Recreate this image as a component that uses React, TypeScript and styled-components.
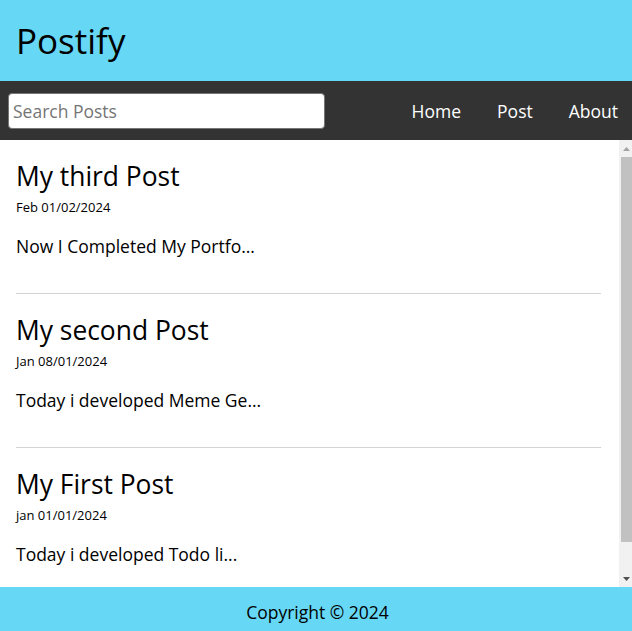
import React from "react";
import styled, { createGlobalStyle } from "styled-components";

const GlobalStyle = createGlobalStyle`
  * { margin: 0; padding: 0; box-sizing: border-box; }
  html { font-size: 18px; }
  body { font-family: "Open Sans", "Liberation Sans", sans-serif; color: #000; background: #fff; }
`;

const Shell = styled.div`
  height: 100vh;
  display: flex;
  flex-direction: column;
`;

const Header = styled.header`
  flex: 0 0 81px;
  background: #66d8f5;
  display: flex;
  align-items: center;
  padding: 0 16px;
`;

const Title = styled.h1`
  font-size: 35px;
  font-weight: 400;
`;

const Nav = styled.nav`
  flex: 0 0 59px;
  background: #333;
  display: flex;
  align-items: center;
  justify-content: space-between;
  padding-left: 8px;
`;

const Search = styled.input`
  width: 317px;
  height: 36px;
  font-family: inherit;
  font-size: 17.5px;
  padding: 0 4px;
  border: 1px solid #767676;
  border-radius: 4px;
  outline: none;
  &::placeholder { color: #757575; }
`;

const Links = styled.ul`
  list-style: none;
  display: flex;
  gap: 36px;
  padding-right: 14px;
`;

const LinkItem = styled.li`
  color: #fff;
  font-size: 17.5px;
`;

const Main = styled.main`
  flex: 1;
  min-height: 0;
  display: flex;
  background: #fff;
`;

const Feed = styled.div`
  flex: 1;
  min-width: 0;
  overflow: hidden;
  padding: 18px 16px 0;
`;

const Rail = styled.div`
  flex: 0 0 15px;
  border-left: 2px solid #fff;
  background: #f1f1f1;
  padding-left: 2px;
  display: flex;
  flex-direction: column;
`;

const RailButton = styled.div`
  flex: 0 0 17px;
  display: flex;
  align-items: center;
  justify-content: center;
`;

const Thumb = styled.div<{ $size: number }>`
  flex: 0 0 ${(p) => p.$size}px;
  background: #c1c1c1;
`;

const RailSpace = styled.div`
  flex: 1;
`;

const Post = styled.article`
  padding-bottom: 17px;
  margin-bottom: 18px;
  border-bottom: 1px solid lightgray;
  &:last-child { border-bottom: none; margin-bottom: 0; }
`;

const PostTitle = styled.h2`
  font-size: 26.4px;
  font-weight: 400;
`;

const PostDate = styled.p`
  font-size: 13px;
  margin-top: 4px;
`;

const PostBody = styled.p`
  font-size: 17.5px;
  margin: 18px 0;
`;

const Footer = styled.footer`
  flex: 0 0 44px;
  background: #66d8f5;
  display: grid;
  place-content: center;
  padding: 6px 0 0 3px;
  font-size: 17.5px;
`;

const posts = [
  { title: "My third Post", date: "Feb 01/02/2024", body: "Now I Completed My Portfo..." },
  { title: "My second Post", date: "Jan 08/01/2024", body: "Today i developed Meme Ge..." },
  { title: "My First Post", date: "jan 01/01/2024", body: "Today i developed Todo li..." },
];

const Arrow = ({ up, color }: { up?: boolean; color: string }) => (
  <svg width="7" height="4" viewBox="0 0 7 4">
    <path d={up ? "M0 4 L3.5 0 L7 4 Z" : "M0 0 L7 0 L3.5 4 Z"} fill={color} />
  </svg>
);

export default function App() {
  return (
    <Shell>
      <GlobalStyle />
      <Header>
        <Title>Postify</Title>
      </Header>
      <Nav>
        <Search type="text" placeholder="Search Posts" />
        <Links>
          <LinkItem>Home</LinkItem>
          <LinkItem>Post</LinkItem>
          <LinkItem>About</LinkItem>
        </Links>
      </Nav>
      <Main>
        <Feed>
          {posts.map((p) => (
            <Post key={p.title}>
              <PostTitle>{p.title}</PostTitle>
              <PostDate>{p.date}</PostDate>
              <PostBody>{p.body}</PostBody>
            </Post>
          ))}
        </Feed>
        <Rail aria-hidden>
          <RailButton>
            <Arrow up color="#a3a3a3" />
          </RailButton>
          <Thumb $size={385} />
          <RailSpace />
          <RailButton>
            <Arrow color="#505050" />
          </RailButton>
        </Rail>
      </Main>
      <Footer>Copyright © 2024</Footer>
    </Shell>
  );
}
